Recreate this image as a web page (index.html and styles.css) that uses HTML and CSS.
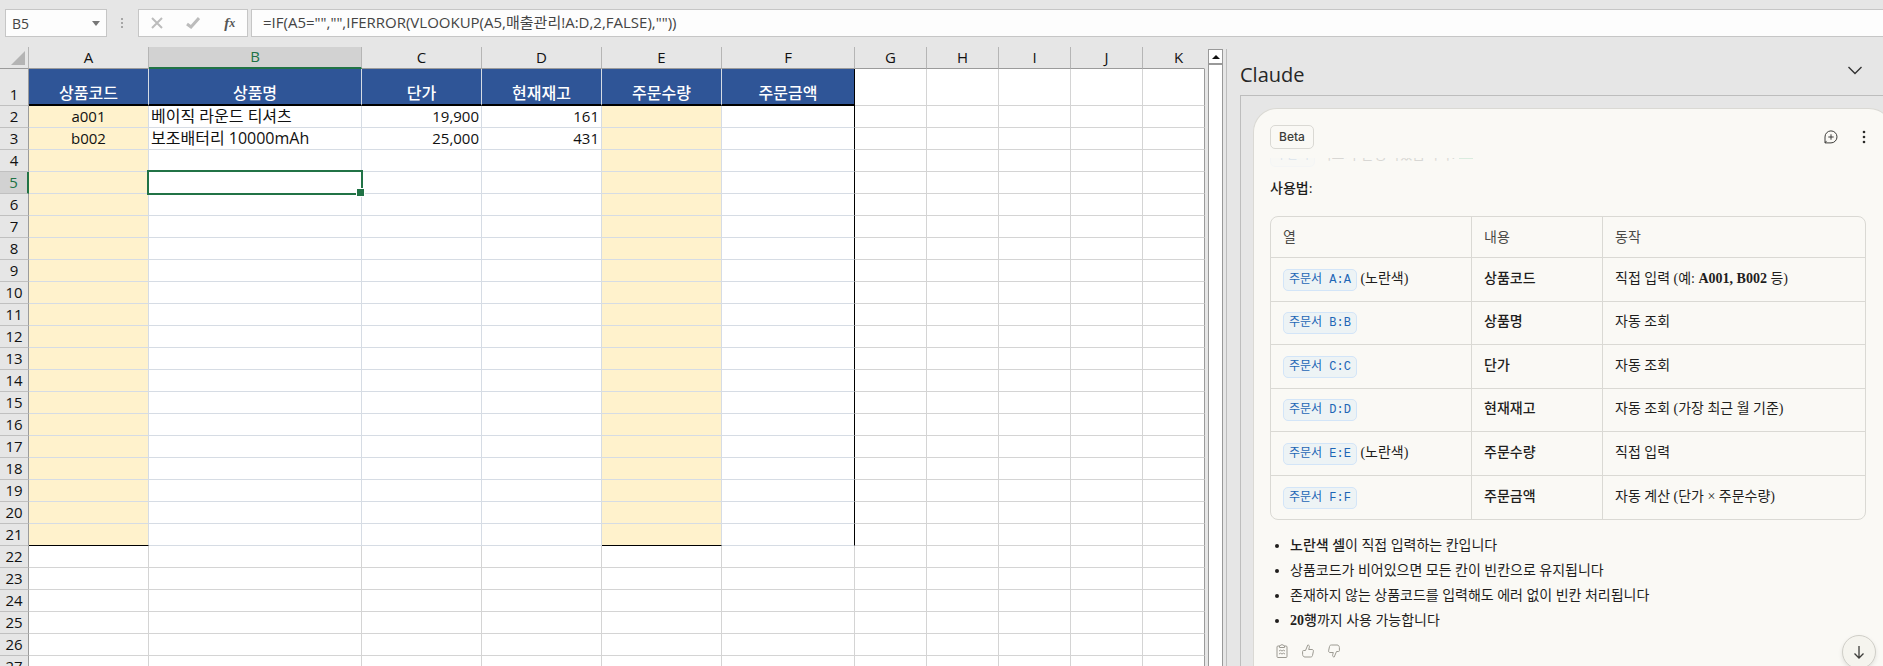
FILE: index.html
```html
<!DOCTYPE html>
<html lang="ko">
<head>
    <meta charset="UTF-8">
    <title>주문서</title>
    <link rel="stylesheet" href="styles.css">
</head>
<body>
<div class="formula-bar">
    <div class="name-box">
        <input type="text" value="B5" aria-label="이름 상자">
        <svg width="8" height="5" viewBox="0 0 8 5"><path d="M0 0h8L4 5z" fill="#777"/></svg>
    </div>
    <svg class="grip" width="2" height="10" viewBox="0 0 2 10" fill="#a6a6a6"><path d="M0 0h2v2H0zM0 4h2v2H0zM0 8h2v2H0z"/></svg>
    <div class="formula-buttons">
        <button type="button" aria-label="취소"><svg width="12" height="12" viewBox="0 0 12 12" fill="none" stroke="#bcbcbc" stroke-width="2"><path d="M1 1l10 10M11 1L1 11"/></svg></button>
        <button type="button" aria-label="입력"><svg width="14" height="12" viewBox="0 0 14 12" fill="none" stroke="#bcbcbc" stroke-width="3"><path d="M1 7l4 3 8-9"/></svg></button>
        <button type="button" class="fx" aria-label="함수 삽입">f<small>x</small></button>
    </div>
    <input class="formula" type="text" aria-label="수식" value='=IF(A5="","",IFERROR(VLOOKUP(A5,매출관리!A:D,2,FALSE),""))'>
</div>

<div class="workspace">
    <div class="sheet">
        <table class="grid">
            <colgroup>
                <col class="c-num"><col class="c-mid"><col class="c-name"><col class="c-mid"><col class="c-mid"><col class="c-mid"><col class="c-total">
                <col class="c-std"><col class="c-std"><col class="c-std"><col class="c-std"><col>
            </colgroup>
            <thead>
                <tr>
                    <th class="corner"><svg width="14" height="14" viewBox="0 0 14 14"><path d="M14 0v14H0z" fill="#b4b4b4"/></svg></th>
                    <th>A</th><th class="active">B</th><th>C</th><th>D</th><th>E</th><th>F</th><th>G</th><th>H</th><th>I</th><th>J</th><th>K</th>
                </tr>
            </thead>
            <tbody id="rows">
                <tr class="titles">
                    <th>1</th><td>상품코드</td><td>상품명</td><td>단가</td><td>현재재고</td><td>주문수량</td><td>주문금액</td><td></td><td></td><td></td><td></td><td></td>
                </tr>
                <tr class="order">
                    <th>2</th><td>a001</td><td>베이직 라운드 티셔츠</td><td>19,900</td><td>161</td><td></td><td></td><td></td><td></td><td></td><td></td><td></td>
                </tr>
                <tr class="order">
                    <th>3</th><td>b002</td><td>보조배터리 10000mAh</td><td>25,000</td><td>431</td><td></td><td></td><td></td><td></td><td></td><td></td><td></td>
                </tr>
            </tbody>
        </table>
    </div>
    <div class="scrollbar">
        <button type="button" aria-label="위로 스크롤"><svg width="8" height="4" viewBox="0 0 8 4"><path d="M0 4l4-4 4 4z" fill="#111"/></svg></button>
        <div class="track"></div>
    </div>

    <aside class="pane">
        <div class="pane-title">
            <h2>Claude</h2>
            <button type="button" aria-label="작업창 메뉴"><svg width="14" height="9" viewBox="0 0 14 9" fill="none" stroke="#333" stroke-width="1.4"><path d="M.5 1L7 7.500 13.500 1"/></svg></button>
        </div>
        <div class="pane-frame">
            <div class="card">
                <header class="card-head">
                    <span class="beta">Beta</span>
                    <div class="card-actions">
                        <button type="button" aria-label="새 대화"><svg width="14" height="14" viewBox="0 0 14 14" fill="none" stroke="#3d3d3a"><path d="M1 12.800V7a6 6 0 1 1 6 5.900H1l1.500-2"/><path d="M7 4.300v5.400M4.300 7h5.400"/></svg></button>
                        <button type="button" aria-label="더 보기"><svg width="4" height="14" viewBox="0 0 4 14" fill="#2b2b29"><circle cx="2" cy="2" r="1.300"/><circle cx="2" cy="7" r="1.300"/><circle cx="2" cy="12" r="1.300"/></svg></button>
                    </div>
                </header>
                <div class="faded"><p><code>주문서</code> 시트가 완성되었습니다! <i></i></p></div>
                <h3>사용법:</h3>
                <table class="usage">
                    <colgroup><col class="u-col"><col class="u-what"><col></colgroup>
                    <thead>
                        <tr><th>열</th><th>내용</th><th>동작</th></tr>
                    </thead>
                    <tbody>
                        <tr><td><code>주문서 A:A</code> (노란색)</td><td><b>상품코드</b></td><td>직접 입력 (예: <span class="sample">A001, B002</span> 등)</td></tr>
                        <tr><td><code>주문서 B:B</code></td><td><b>상품명</b></td><td>자동 조회</td></tr>
                        <tr><td><code>주문서 C:C</code></td><td><b>단가</b></td><td>자동 조회</td></tr>
                        <tr><td><code>주문서 D:D</code></td><td><b>현재재고</b></td><td>자동 조회 (가장 최근 월 기준)</td></tr>
                        <tr><td><code>주문서 E:E</code> (노란색)</td><td><b>주문수량</b></td><td>직접 입력</td></tr>
                        <tr><td><code>주문서 F:F</code></td><td><b>주문금액</b></td><td>자동 계산 (단가 × 주문수량)</td></tr>
                    </tbody>
                </table>
                <ul class="notes">
                    <li><b>노란색 셀</b>이 직접 입력하는 칸입니다</li>
                    <li>상품코드가 비어있으면 모든 칸이 빈칸으로 유지됩니다</li>
                    <li>존재하지 않는 상품코드를 입력해도 에러 없이 빈칸 처리됩니다</li>
                    <li><b><span class="sample">20</span>행</b>까지 사용 가능합니다</li>
                </ul>
                <div class="feedback">
                    <button type="button" aria-label="복사"><svg width="12" height="14" viewBox="0 0 12 14" fill="none" stroke="#9c9a92"><path d="M3.500 2H2a1 1 0 0 0-1 1v9.500a1 1 0 0 0 1 1h8a1 1 0 0 0 1-1V3a1 1 0 0 0-1-1H8.500"/><path d="M3.500 3.500V1.800L6 .6l2.500 1.200v1.700zM3 7l1.500-.8L6 7l1.500-.8L9 7M3 10l1.500-.8L6 10l1.500-.8L9 10"/></svg></button>
                    <button type="button" aria-label="좋아요"><svg width="12" height="14" viewBox="0 0 12 14" fill="none" stroke="#9c9a92"><path d="M1.500 6.500h2L5.800 1c1.300 0 1.900 1 1.500 2.300L6.700 5.500H10c1 0 1.600.8 1.400 1.700l-.9 4.300c-.2 1-.9 1.500-1.800 1.500H3C1.500 13 .8 12 .6 10.500V7.500c0-.6.3-1 .9-1z"/></svg></button>
                    <button type="button" aria-label="싫어요"><svg width="12" height="14" viewBox="0 0 12 14" fill="none" stroke="#9c9a92"><path d="M10.500 7.500h-2L6.200 13c-1.300 0-1.900-1-1.500-2.300l.6-2.200H2C1 8.500.4 7.700.6 6.800l.9-4.300C1.700 1.500 2.400 1 3.300 1H9c1.500 0 2.200 1 2.400 2.500v3c0 .6-.3 1-.9 1z"/></svg></button>
                </div>
            </div>
            <button type="button" class="to-bottom" aria-label="맨 아래로"><svg width="12" height="14" viewBox="0 0 12 14" fill="none" stroke="#3d3d3a" stroke-width="1.300"><path d="M6 1v12M1.500 8.500L6 13l4.500-4.500"/></svg></button>
        </div>
    </aside>
</div>
<script>
    const rows = document.getElementById('rows');

    // rows 2-21 belong to the order form, the rest are blank
    for (let n = 4; n <= 27; n++) {
        const tr = document.createElement('tr');
        if (n <= 21) tr.className = 'order';
        tr.innerHTML = '<th>' + n + '</th>' + '<td></td>'.repeat(11);
        rows.appendChild(tr);
    }

    const selected = rows.rows[4];
    selected.cells[0].className = 'active';
    selected.cells[2].className = 'selected';
    rows.rows[20].classList.add('last');
</script>
</body>
</html>
```
FILE: styles.css
```css
* {
    box-sizing: border-box;
}

body {
    margin: 0;
    height: 100vh;
    display: flex;
    flex-direction: column;
    overflow: hidden;
    background: #e6e6e6;
    color: #111;
    font-family: "Open Sans", "Noto Sans CJK KR", sans-serif;
    font-size: 15px;
}

button {
    display: flex;
    align-items: center;
    justify-content: center;
    padding: 0;
    border: 0;
    background: none;
}

/* formula bar */
.formula-bar {
    display: flex;
    align-items: center;
    padding: 9px 0 10px 5px;
}

.name-box,
.formula-buttons,
.formula {
    height: 28px;
    border: 1px solid #c6c6c6;
    background: #fdfdfd;
}

.name-box {
    display: flex;
    align-items: center;
    width: 102px;
    padding: 0 6px;
}

.name-box input {
    flex: 1;
    min-width: 0;
    padding: 0;
    border: 0;
    background: none;
    color: #444;
    font-family: inherit;
    font-size: 14px;
}

.grip {
    margin: 0 15px 0 14px;
}

.formula-buttons {
    display: flex;
    align-items: center;
    justify-content: space-around;
    width: 110px;
    margin-right: 3px;
}

.fx {
    color: #555;
    font: italic bold 15px "Liberation Serif", serif;
}

.fx small {
    font-size: 12px;
}

.formula {
    flex: 1;
    min-width: 0;
    padding: 0 12px 4px 11px;
    border-right: 0;
    color: #444;
    font-family: inherit;
    font-size: 15px;
}

/* sheet */
.workspace {
    flex: 1;
    display: flex;
    min-height: 0;
}

.sheet {
    flex: 1;
    min-width: 0;
    overflow: hidden;
}

.grid {
    width: 100%;
    table-layout: fixed;
    border-spacing: 0;
}

.c-num { width: 29px; }
.c-mid { width: 120px; }
.c-name { width: 213px; }
.c-total { width: 133px; }
.c-std { width: 72px; }

.grid th,
.grid td {
    height: 22px;
    padding: 0 2px 2px;
    overflow: hidden;
    line-height: 18px;
    white-space: nowrap;
}

.grid th {
    padding: 0 0 2px;
    border-right: 1px solid #9b9b9b;
    border-bottom: 1px solid #c0c0c0;
    background: #e6e6e6;
    font-weight: normal;
}

.grid thead th {
    border-right-color: #b5b5b5;
    border-bottom-color: #9b9b9b;
}

.grid thead th:last-child {
    padding-left: 10px;
    border-right-color: #e6e6e6;
}

.grid .corner {
    padding: 4px 3px 3px;
    text-align: right;
    line-height: 0;
}

.grid thead .active {
    border-bottom: 2px solid #217346;
    background: #d2d2d2;
    color: #217346;
}

.grid tbody .active {
    border-right: 2px solid #217346;
    background: #d2d2d2;
    color: #217346;
}

.grid td {
    border-right: 1px solid #d4d4d4;
    border-bottom: 1px solid #d4d4d4;
    background: #fff;
}

.grid td:last-child {
    border-right-color: #9b9b9b;
}

.grid .titles th,
.grid .titles td {
    height: 37px;
    vertical-align: bottom;
}

.grid .titles td:nth-child(-n+7) {
    border-right-color: #d6dce4;
    border-bottom: 2px solid #000;
    background: #2f5597;
    color: #fff;
    font-size: 16px;
    font-weight: 500;
    text-align: center;
}

.grid .order td:nth-child(-n+7) {
    border-color: #d6dce4;
}

.grid .order td:nth-child(2),
.grid .order td:nth-child(6) {
    background: #fff2cc;
}

.grid .order td:nth-child(2) {
    text-align: center;
}

.grid .order td:nth-child(3) {
    font-size: 16px;
}

.grid .order td:nth-child(4),
.grid .order td:nth-child(5) {
    text-align: right;
}

.grid tr.titles td:nth-child(7),
.grid tr.order td:nth-child(7) {
    border-right-color: #000;
}

.grid tr.last td:nth-child(2),
.grid tr.last td:nth-child(6) {
    border-bottom-color: #000;
}

.grid .selected {
    position: relative;
    overflow: visible;
}

.selected::before {
    content: "";
    position: absolute;
    inset: -2px;
    border: 2px solid #217346;
}

.selected::after {
    content: "";
    position: absolute;
    right: -4px;
    bottom: -4px;
    width: 7px;
    height: 7px;
    border: 1px solid #fff;
    background: #217346;
}

.scrollbar {
    display: flex;
    flex-direction: column;
    width: 15px;
    margin: 2px 3px 0;
}

.scrollbar button {
    height: 15px;
    border: 1px solid #999;
    background: #fff;
}

.track {
    flex: 1;
    border: 1px solid #999;
    border-bottom: 0;
    background: #fff;
}

/* side pane */
.pane {
    display: flex;
    flex-direction: column;
    width: 35%;
    max-width: 657px;
    margin-top: 2px;
    padding-left: 13px;
    border-left: 1px solid #bdbdbd;
}

.pane-title {
    display: flex;
    justify-content: space-between;
    padding: 10px 21px 5px 0;
}

.pane-title h2 {
    margin: 0;
    color: #262626;
    font-family: "Open Sans", sans-serif;
    font-size: 20px;
    font-weight: normal;
    line-height: 31px;
}

.pane-title button {
    height: 22px;
}

.pane-frame {
    flex: 1;
    position: relative;
    min-height: 0;
    padding: 12px 0 0 12px;
    overflow: hidden;
    border: solid #bdbdbd;
    border-width: 1px 0 0 1px;
}

.card {
    height: 100%;
    margin-right: -10px;
    padding: 16px 26px 0 16px;
    border: 1px solid #dad9d4;
    border-bottom: 0;
    border-radius: 24px 24px 0 0;
    background: #faf9f5;
    color: #1f1e1d;
    font-family: "Liberation Serif", "Noto Sans CJK KR", serif;
    font-size: 14px;
    line-height: 25px;
}

.card-head,
.card-actions {
    display: flex;
    align-items: center;
    justify-content: space-between;
}

.card-actions {
    gap: 24px;
}

.beta {
    padding: 0 8px;
    border: 1px solid #dad9d4;
    border-radius: 5px;
    color: #3d3d3a;
    font-family: Inter, sans-serif;
    font-size: 12px;
    font-weight: 500;
    line-height: 22px;
}

/* tail of the previous line, scrolled under the card header */
.faded {
    display: flex;
    align-items: flex-end;
    height: 9px;
    margin-top: 9px;
    overflow: hidden;
    opacity: 0.15;
}

.faded p {
    margin: 0;
}

.faded i {
    display: inline-block;
    width: 14px;
    height: 14px;
    background: #2ba56b;
}

.card h3 {
    margin: 9px 0 15px;
    font-size: 14px;
    font-weight: 500;
}

code {
    display: inline-block;
    padding: 0 5px;
    border: 1px solid #d3e5f8;
    border-radius: 5px;
    background: #edf3f5;
    color: #1d66b5;
    font-family: "Liberation Mono", "Noto Sans CJK KR", monospace;
    font-size: 12px;
    line-height: 20px;
}

.usage {
    width: 100%;
    table-layout: fixed;
    border: 1px solid #dad9d4;
    border-radius: 8px;
    border-spacing: 0;
}

.u-col { width: 201px; }
.u-what { width: 131px; }

.usage th,
.usage td {
    height: 43px;
    padding: 0 12px 3px;
    border-right: 1px solid #dad9d4;
    border-bottom: 1px solid #dad9d4;
    text-align: left;
}

.usage tr:nth-child(odd) td {
    height: 44px;
}

.usage tr th {
    height: 41px;
    padding-bottom: 0;
    color: #4a4946;
    font-weight: normal;
}

.usage th:last-child,
.usage td:last-child {
    border-right: 0;
}

.usage tr:last-child td {
    border-bottom: 0;
}

.card b {
    font-weight: 500;
}

.card .sample {
    font-weight: bold;
}

.notes {
    margin: 13px 0 0;
    padding-left: 20px;
}

.feedback {
    display: flex;
    gap: 14px;
    padding: 11px 6px;
}

.to-bottom {
    position: absolute;
    right: 7px;
    bottom: -3px;
    width: 34px;
    height: 34px;
    border: 1px solid #d0cfc8;
    border-radius: 50%;
    background: #f5f4ee;
    box-shadow: 0 2px 4px rgba(0, 0, 0, 0.1);
}
```
